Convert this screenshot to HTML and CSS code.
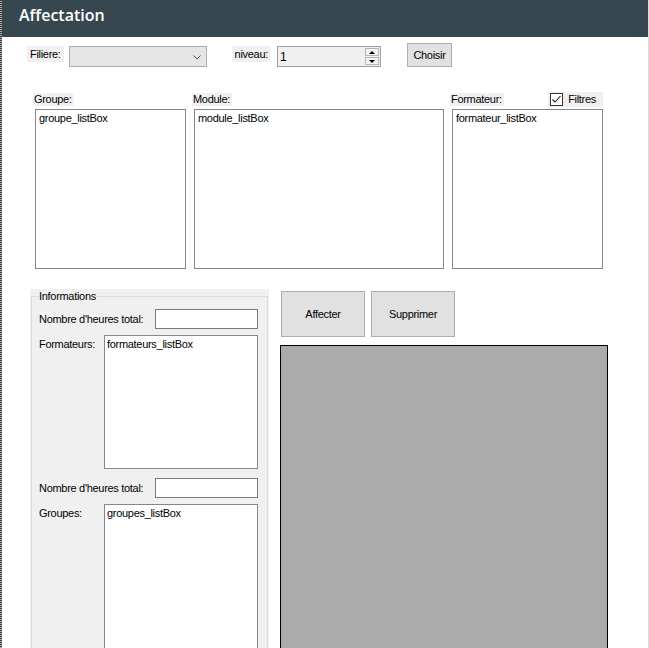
FILE: index.html
```html
<!DOCTYPE html>
<html lang="fr">
<head>
<meta charset="utf-8">
<title>Affectation</title>
<link rel="stylesheet" href="styles.css">
</head>
<body>
<div class="app">
  <header class="titlebar">Affectation</header>

  <div class="toolbar">
    <span class="lbl lbl-bg lbl-filiere">Filiere:</span>
    <div class="combo">
      <svg class="chevron" width="8" height="5" viewBox="0 0 8 5"><polyline points="0.5,0.5 4,4 7.5,0.5" fill="none" stroke="#555" stroke-width="1"/></svg>
    </div>
    <span class="lbl lbl-bg lbl-niveau">niveau:</span>
    <div class="spin">
      <span class="spin-val">1</span>
      <div class="spin-btns">
        <span class="spin-btn"><span class="tri-up"></span></span>
        <span class="spin-btn"><span class="tri-down"></span></span>
      </div>
    </div>
    <button class="btn btn-choisir">Choisir</button>
  </div>

  <div class="lists">
    <div class="col">
      <div class="col-head"><span class="lbl lbl-bg lbl-head">Groupe:</span></div>
      <div class="listbox">groupe_listBox</div>
    </div>
    <div class="col">
      <div class="col-head"><span class="lbl lbl-bg lbl-head">Module:</span></div>
      <div class="listbox">module_listBox</div>
    </div>
    <div class="col">
      <div class="col-head">
        <span class="lbl lbl-bg lbl-head">Formateur:</span>
        <label class="check">
          <span class="checkbox">
            <svg width="11" height="11" viewBox="0 0 11 11"><polyline points="1.5,5.5 4,8 9.5,2" fill="none" stroke="#222" stroke-width="1.1"/></svg>
          </span>
          <span class="lbl">Filtres</span>
        </label>
      </div>
      <div class="listbox">formateur_listBox</div>
    </div>
  </div>

  <div class="bottom">
    <div class="info">
      <fieldset class="group">
        <legend class="lbl legend">Informations</legend>
        <div class="frow">
          <span class="lbl">Nombre d'heures total:</span>
          <div class="textbox"></div>
        </div>
        <div class="frow frow-top gap-6">
          <span class="lbl lbl-side">Formateurs:</span>
          <div class="listbox listbox-small">formateurs_listBox</div>
        </div>
        <div class="frow gap-9">
          <span class="lbl">Nombre d'heures total:</span>
          <div class="textbox"></div>
        </div>
        <div class="frow frow-top gap-6">
          <span class="lbl lbl-side">Groupes:</span>
          <div class="listbox listbox-tall">groupes_listBox</div>
        </div>
      </fieldset>
    </div>
    <div class="actions">
      <div class="btn-row">
        <button class="btn btn-big">Affecter</button>
        <button class="btn btn-big">Supprimer</button>
      </div>
      <div class="canvas"></div>
    </div>
  </div>
</div>
</body>
</html>
```

FILE: styles.css
```css
* { box-sizing: border-box; }
html, body { margin: 0; padding: 0; background: #fff; }

.app {
  width: 649px;
  height: 648px;
  overflow: hidden;
  padding-left: 2px;
  border-right: 1px solid #dadada;
  background: repeating-linear-gradient(to bottom, #3c3c3c 0 1px, #a8a8a8 1px 2px) left top / 2px 100% no-repeat, #fff;
  font-family: "Liberation Sans", Arial, sans-serif;
  font-size: 11px;
  color: #000;
}

.titlebar {
  height: 37px;
  line-height: 30px;
  padding-left: 17px;
  background: #37474f;
  color: #fff;
  font-family: "Open Sans", "Noto Sans", sans-serif;
  font-weight: 600;
  font-size: 16px;
}

.lbl {
  font-family: "Liberation Sans", Arial, sans-serif;
  font-size: 11px;
  letter-spacing: -0.3px;
  line-height: 13px;
  white-space: nowrap;
}
.lbl-bg { background: #f0f0f0; }

/* toolbar */
.toolbar {
  display: flex;
  align-items: flex-end;
  margin-top: 6px;
  padding-left: 25px;
}
.lbl-filiere, .lbl-niveau {
  align-self: flex-start;
  margin-top: 3px;
  padding: 2px 3px 1px 3px;
  line-height: 13px;
}
.combo {
  margin-left: 5px;
  width: 138px;
  height: 21px;
  background: #e5e5e5;
  border: 1px solid #adadad;
  display: flex;
  align-items: center;
  justify-content: flex-end;
  padding-right: 5px;
}
.chevron { display: block; margin-top: 1px; }
.lbl-niveau { margin-left: 25px; }
.spin {
  margin-left: 6px;
  width: 104px;
  height: 21px;
  background: #f0f0f0;
  border: 1px solid #a0a0a0;
  display: flex;
  align-items: center;
  justify-content: space-between;
  padding-left: 2px;
}
.spin-val { font-size: 12px; line-height: 14px; }
.spin-btns {
  display: flex;
  flex-direction: column;
  gap: 1px;
  margin-right: 1px;
}
.spin-btn {
  width: 14px;
  height: 8px;
  background: #f4f4f4;
  border: 1px solid #b5b5b5;
  display: flex;
  align-items: center;
  justify-content: center;
}
.tri-up {
  width: 0; height: 0;
  border-left: 3px solid transparent;
  border-right: 3px solid transparent;
  border-bottom: 3px solid #000;
}
.tri-down {
  width: 0; height: 0;
  border-left: 3px solid transparent;
  border-right: 3px solid transparent;
  border-top: 3px solid #000;
}

.btn {
  font-family: "Liberation Sans", Arial, sans-serif;
  font-size: 11px;
  letter-spacing: -0.3px;
  color: #000;
  background: #e1e1e1;
  border: 1px solid #adadad;
  padding: 0;
  margin: 0;
}
.btn-choisir {
  margin-left: 26px;
  width: 45px;
  height: 24px;
}

/* lists */
.lists {
  display: grid;
  grid-template-columns: 151px 250px 151px;
  column-gap: 8px;
  margin-top: 26px;
  padding-left: 33px;
}
.col { display: flex; flex-direction: column; }
.col-head {
  height: 16px;
  display: flex;
  justify-content: space-between;
  align-items: flex-start;
}
.lbl-head {
  margin-left: -2px;
  padding: 0 2px 0 1px;
  line-height: 13px;
}
.listbox {
  background: #fff;
  border: 1px solid #828790;
  padding: 2px 3px;
  font-size: 11px;
  letter-spacing: -0.3px;
  line-height: 13px;
  height: 160px;
}
.check {
  display: flex;
  align-items: center;
  background: #f0f0f0;
  height: 15px;
  margin-top: -1px;
  padding: 0 7px 0 2px;
  gap: 5px;
}
.checkbox {
  width: 13px;
  height: 13px;
  border: 1px solid #333;
  background: #fff;
  display: flex;
  align-items: center;
  justify-content: center;
}
.checkbox svg { display: block; }

/* bottom */
.bottom {
  display: flex;
  gap: 11px;
  margin-top: 20px;
  padding-left: 28px;
}
.info {
  width: 239px;
  height: 400px;
  flex: none;
  background: #f0f0f0;
  padding: 1px 1px 0 1px;
}
.group {
  margin: 0;
  min-width: 0;
  height: 400px;
  padding: 6px 9px 0 7px;
  border: 1px solid #dcdcdc;
}
.legend {
  padding: 0;
  margin-left: 0;
  line-height: 13px;
}
.frow {
  display: flex;
  justify-content: space-between;
  align-items: center;
}
.frow-top { align-items: flex-start; }
.gap-6 { margin-top: 6px; }
.gap-9 { margin-top: 9px; }
.lbl-side { margin-top: 3px; }
.textbox {
  width: 103px;
  height: 20px;
  background: #fff;
  border: 1px solid #7a7a7a;
}
.listbox-small {
  width: 154px;
  height: 134px;
  padding: 2px 2px;
}
.listbox-tall {
  width: 154px;
  height: 200px;
  padding: 2px 2px;
}

.actions {
  display: flex;
  flex-direction: column;
}
.btn-row {
  display: flex;
  gap: 6px;
  margin-top: 2px;
  margin-left: 1px;
}
.btn-big {
  width: 84px;
  height: 46px;
}
.canvas {
  margin-top: 8px;
  width: 328px;
  height: 400px;
  background: #ababab;
  border: 1px solid #000;
}
```
